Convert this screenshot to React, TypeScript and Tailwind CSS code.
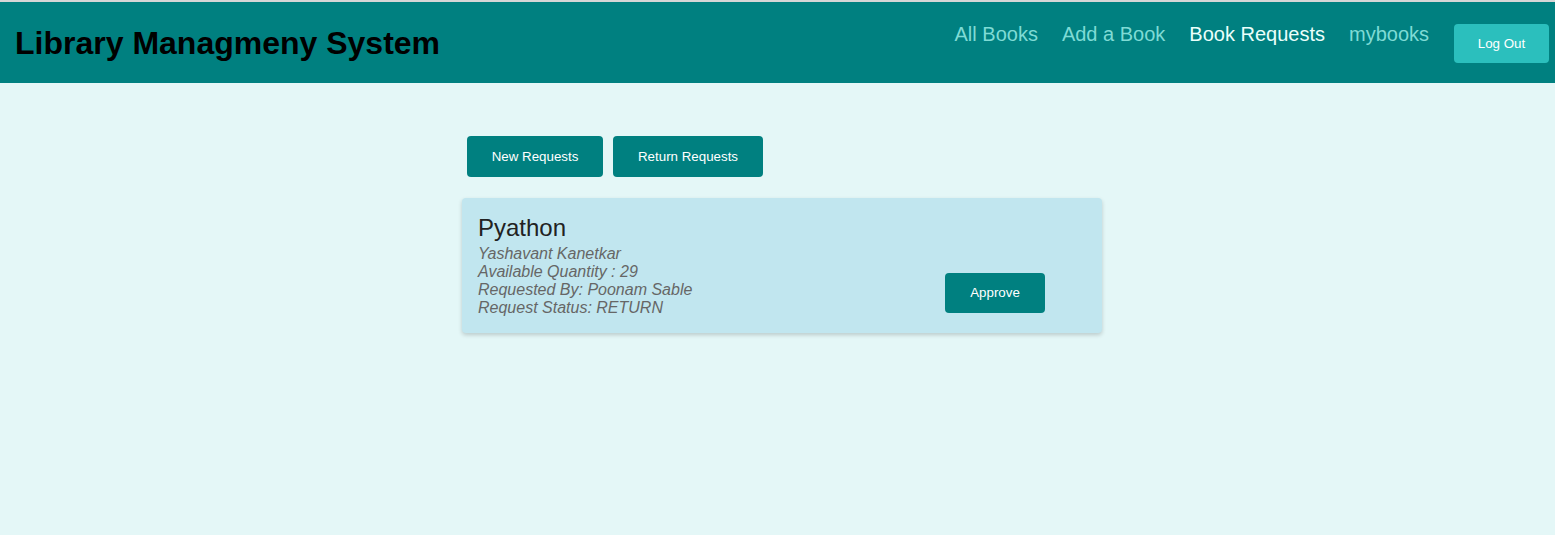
import React from 'react';

const navLinks = [
  { label: 'All Books', active: false },
  { label: 'Add a Book', active: false },
  { label: 'Book Requests', active: true },
  { label: 'mybooks', active: false },
];

const Header: React.FC = () => (
  <div>
    <div className="h-[2px] bg-[#d6d6d6]"></div>
    <header className="h-[81px] bg-[#008080] flex items-start justify-between pl-[15px] pr-[6px]">
      <h1 className="mt-[23px] text-[32px] font-bold text-black leading-[normal]">Library Managmeny System</h1>
      <nav className="flex items-start mt-[21px]">
        {navLinks.map((link) => (
          <a
            key={link.label}
            href="#"
            className={`text-[20px] leading-[normal] mx-[12px] ${link.active ? 'text-[#eafffb]' : 'text-[#7fdbd5]'}`}
          >
            {link.label}
          </a>
        ))}
        <button className="ml-[13px] mt-[1px] h-[39px] w-[95px] rounded-[4px] bg-[#2bbfbd] text-white text-[13.333px]">
          Log Out
        </button>
      </nav>
    </header>
  </div>
);

const RequestCard: React.FC = () => (
  <div className="w-[640px] bg-[#c1e6ef] rounded-[4px] shadow-[0_2px_4px_rgba(0,0,0,0.18)] px-[16px] pt-[16px] pb-[16px] flex justify-between">
    <div>
      <h2 className="text-[24px] leading-[28px] text-[#222] mb-[3px]">Pyathon</h2>
      <div className="italic text-[16px] leading-[18px] text-[#666]">
        <p>Yashavant Kanetkar</p>
        <p>Available Quantity : 29</p>
        <p>Requested By: Poonam Sable</p>
        <p>Request Status: RETURN</p>
      </div>
    </div>
    <div className="flex items-end pb-[4px] pr-[41px]">
      <button className="h-[40px] w-[100px] rounded-[4px] bg-[#008080] text-white text-[13.333px]">Approve</button>
    </div>
  </div>
);

export default function App() {
  return (
    <div className="min-h-screen bg-[#e4f7f7] font-['Liberation_Sans',Arial,sans-serif]">
      <Header />
      <main className="flex justify-center pl-[9px]">
        <div className="w-[640px] pt-[53px]">
          <div className="flex gap-[10px] ml-[5px]">
            <button className="h-[41px] w-[136px] rounded-[4px] bg-[#008080] text-white text-[13.333px]">New Requests</button>
            <button className="h-[41px] w-[150px] rounded-[4px] bg-[#008080] text-white text-[13.333px]">Return Requests</button>
          </div>
          <div className="mt-[21px]">
            <RequestCard />
          </div>
        </div>
      </main>
    </div>
  );
}
